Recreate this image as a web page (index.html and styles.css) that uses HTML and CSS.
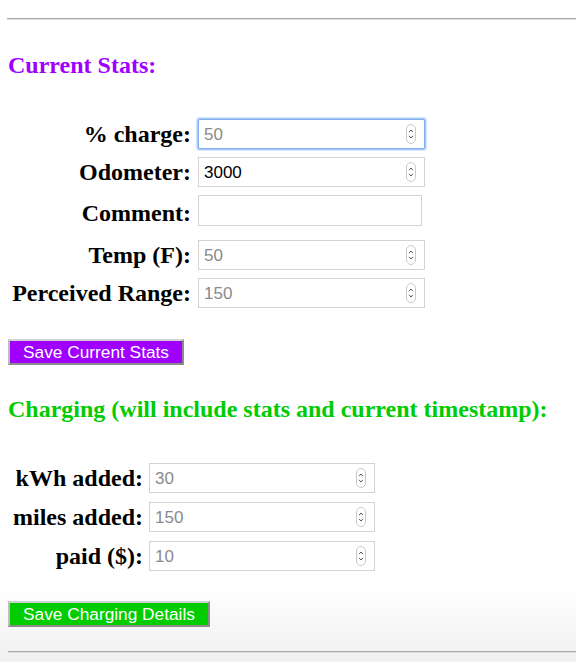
FILE: index.html
```html
<!DOCTYPE html>
<html lang="en">
<head>
<meta charset="utf-8">
<title>EV Stats</title>
<link rel="stylesheet" href="styles.css">
</head>
<body>
<div class="rule rule-top"></div>
<h2 class="title title-purple">Current Stats:</h2>
<div class="form form-stats">
  <label class="lbl">% charge:</label>
  <div class="field field-focus"><input class="inp" type="text" placeholder="50"><span class="spin"><svg viewBox="0 0 10 20" width="10" height="20"><rect x="0.5" y="0.5" width="9" height="19" rx="4.5" fill="#fff" stroke="#c9c9c9"/><path d="M3 8.2 L5 6 L7 8.2 M3 11.8 L5 14 L7 11.8" fill="none" stroke="#555" stroke-width="1"/></svg></span></div>
  <label class="lbl">Odometer:</label>
  <div class="field"><input class="inp" type="text" value="3000"><span class="spin"><svg viewBox="0 0 10 20" width="10" height="20"><rect x="0.5" y="0.5" width="9" height="19" rx="4.5" fill="#fff" stroke="#c9c9c9"/><path d="M3 8.2 L5 6 L7 8.2 M3 11.8 L5 14 L7 11.8" fill="none" stroke="#555" stroke-width="1"/></svg></span></div>
  <label class="lbl">Comment:</label>
  <div class="field field-text"><input class="inp" type="text"></div>
  <label class="lbl">Temp (F):</label>
  <div class="field"><input class="inp" type="text" placeholder="50"><span class="spin"><svg viewBox="0 0 10 20" width="10" height="20"><rect x="0.5" y="0.5" width="9" height="19" rx="4.5" fill="#fff" stroke="#c9c9c9"/><path d="M3 8.2 L5 6 L7 8.2 M3 11.8 L5 14 L7 11.8" fill="none" stroke="#555" stroke-width="1"/></svg></span></div>
  <label class="lbl">Perceived Range:</label>
  <div class="field"><input class="inp" type="text" placeholder="150"><span class="spin"><svg viewBox="0 0 10 20" width="10" height="20"><rect x="0.5" y="0.5" width="9" height="19" rx="4.5" fill="#fff" stroke="#c9c9c9"/><path d="M3 8.2 L5 6 L7 8.2 M3 11.8 L5 14 L7 11.8" fill="none" stroke="#555" stroke-width="1"/></svg></span></div>
</div>
<button class="btn btn-purple" type="button">Save Current Stats</button>
<h2 class="title title-green">Charging (will include stats and current timestamp):</h2>
<div class="form form-charge">
  <label class="lbl">kWh added:</label>
  <div class="field"><input class="inp" type="text" placeholder="30"><span class="spin"><svg viewBox="0 0 10 20" width="10" height="20"><rect x="0.5" y="0.5" width="9" height="19" rx="4.5" fill="#fff" stroke="#c9c9c9"/><path d="M3 8.2 L5 6 L7 8.2 M3 11.8 L5 14 L7 11.8" fill="none" stroke="#555" stroke-width="1"/></svg></span></div>
  <label class="lbl">miles added:</label>
  <div class="field"><input class="inp" type="text" placeholder="150"><span class="spin"><svg viewBox="0 0 10 20" width="10" height="20"><rect x="0.5" y="0.5" width="9" height="19" rx="4.5" fill="#fff" stroke="#c9c9c9"/><path d="M3 8.2 L5 6 L7 8.2 M3 11.8 L5 14 L7 11.8" fill="none" stroke="#555" stroke-width="1"/></svg></span></div>
  <label class="lbl">paid ($):</label>
  <div class="field"><input class="inp" type="text" placeholder="10"><span class="spin"><svg viewBox="0 0 10 20" width="10" height="20"><rect x="0.5" y="0.5" width="9" height="19" rx="4.5" fill="#fff" stroke="#c9c9c9"/><path d="M3 8.2 L5 6 L7 8.2 M3 11.8 L5 14 L7 11.8" fill="none" stroke="#555" stroke-width="1"/></svg></span></div>
</div>
<button class="btn btn-green" type="button">Save Charging Details</button>
<div class="rule rule-bottom"></div>
</body>
</html>
```
FILE: styles.css
```css
html {
  height: 100%;
  overflow: hidden;
  background: linear-gradient(to bottom, #ffffff 0, #ffffff 585px, #f0f0f0 662px);
}
body {
  margin: 0;
  padding: 8px 0 8px 8px;
  font-family: "Liberation Serif", "Times New Roman", serif;
  color: #000;
}
.rule {
  height: 0;
  border-top: 1px solid #a9a9a9;
  border-bottom: 1px solid #dedede;
}
.rule-top {
  margin: 10px 0 0 -1px;
}
.rule-bottom {
  margin: 24px 0 0 0;
}
.title {
  font-size: 24px;
  font-weight: bold;
  line-height: 27px;
  margin: 0;
  white-space: nowrap;
}
.title-purple {
  color: #a000ff;
  margin-top: 32px;
}
.title-green {
  color: #00cc00;
  margin-top: 31px;
}
.form {
  display: grid;
  align-items: center;
}
.form-stats {
  margin-top: 40px;
  grid-template-columns: 183px 227px;
  column-gap: 7px;
  row-gap: 8px;
  grid-template-rows: 30px 30px 37px 30px 30px;
}
.form-charge {
  margin-top: 40px;
  grid-template-columns: 135px 226px;
  column-gap: 6px;
  row-gap: 9px;
  grid-template-rows: 30px 30px 30px;
}
.lbl {
  font-size: 24px;
  font-weight: bold;
  line-height: 27px;
  text-align: right;
  white-space: nowrap;
}
.field {
  position: relative;
  height: 30px;
  box-sizing: border-box;
  border: 1px solid #d3d3d3;
  background: #fff;
  align-self: start;
}
.field-focus {
  border-color: #7eaef0;
  box-shadow: 0 0 0 1px #a9cbf7, 0 0 0 2px #d4e5fb;
  border-radius: 2px;
}
.field-text {
  width: 224px;
  height: 31px;
}
.inp {
  display: block;
  width: 100%;
  height: 100%;
  box-sizing: border-box;
  border: none;
  outline: none;
  background: transparent;
  padding: 1px 24px 0 5px;
  margin: 0;
  font-family: "Liberation Sans", Arial, sans-serif;
  font-size: 17px;
  color: #000;
}
.inp::placeholder {
  color: #8a8a8a;
}
.spin {
  position: absolute;
  right: 8px;
  top: 50%;
  margin-top: -10px;
  width: 10px;
  height: 20px;
  display: block;
}
.spin svg {
  display: block;
}
.btn {
  display: block;
  height: 26px;
  box-sizing: border-box;
  margin: 0;
  padding: 0 13px;
  border: 2px solid;
  border-color: #d2d2d2 #8c8c8c #8c8c8c #bdbdbd;
  font-family: "Liberation Sans", Arial, sans-serif;
  font-size: 17.3px;
  line-height: 22px;
  color: #fff;
  white-space: nowrap;
}
.btn-purple {
  margin-top: 31px;
  background: #a000ff;
}
.btn-green {
  margin-top: 30px;
  background: #00cc00;
}
```
